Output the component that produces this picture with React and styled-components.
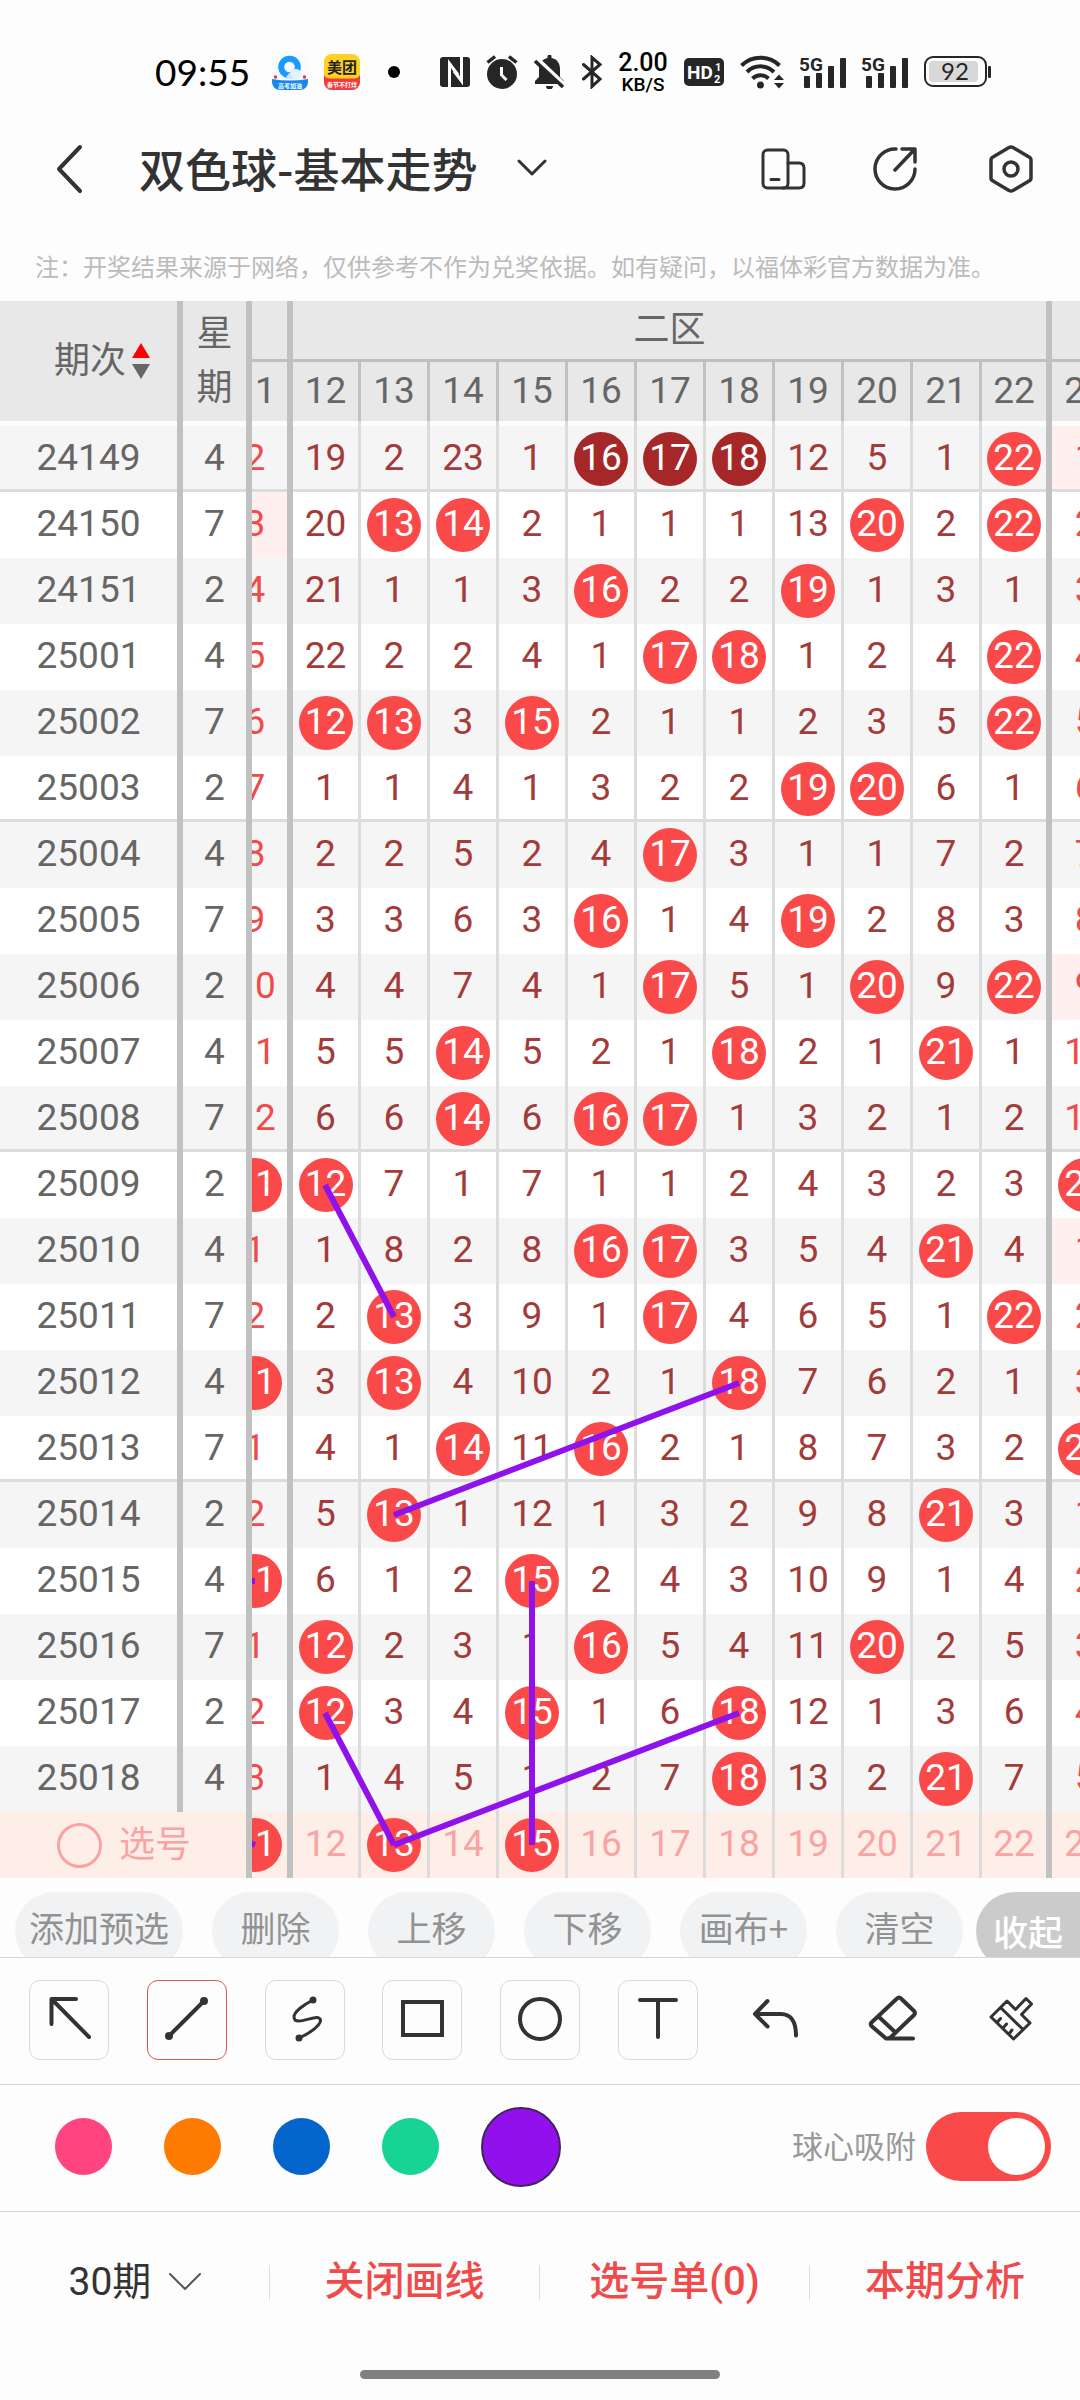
import React, { useLayoutEffect, useRef, useState } from 'react';
import styled, { createGlobalStyle, css } from 'styled-components';

const GlobalStyle = createGlobalStyle`
  * {
    box-sizing: border-box;
  }
  body {
    margin: 0;
    background: #fdfdfd;
    color: #333;
    font-family: Roboto, "Noto Sans CJK SC", sans-serif;
  }
  button, select, input {
    margin: 0;
    padding: 0;
    border: 0;
    background: none;
    color: inherit;
    font: inherit;
    appearance: none;
    cursor: pointer;
  }
`;

/* ---------- data ---------- */

const COLUMNS = [11, 12, 13, 14, 15, 16, 17, 18, 19, 20, 21, 22, 23];

// one entry per column: a number of missed draws, B for a drawn ball,
// D for a repeated ball, a trailing p for a pink cell
const DRAWS = [
  ['24149', 4, '2 19 2 23 1 D D D 12 5 1 B 1p'],
  ['24150', 7, '3p 20 B B 2 1 1 1 13 B 2 B 2'],
  ['24151', 2, '4 21 1 1 3 B 2 2 B 1 3 1 3'],
  ['25001', 4, '5 22 2 2 4 1 B B 1 2 4 B 4'],
  ['25002', 7, '6 B B 3 B 2 1 1 2 3 5 B 5'],
  ['25003', 2, '7 1 1 4 1 3 2 2 B B 6 1 6'],
  ['25004', 4, '8 2 2 5 2 4 B 3 1 1 7 2 7'],
  ['25005', 7, '9 3 3 6 3 B 1 4 B 2 8 3 8'],
  ['25006', 2, '10 4 4 7 4 1 B 5 1 B 9 B 9p'],
  ['25007', 4, '11 5 5 B 5 2 1 B 2 1 B 1 10'],
  ['25008', 7, '12 6 6 B 6 B B 1 3 2 1 2 11'],
  ['25009', 2, 'B B 7 1 7 1 1 2 4 3 2 3 B'],
  ['25010', 4, '1 1 8 2 8 B B 3 5 4 B 4 1p'],
  ['25011', 7, '2 2 B 3 9 1 B 4 6 5 1 B 2'],
  ['25012', 4, 'B 3 B 4 10 2 1 B 7 6 2 1 3'],
  ['25013', 7, '1 4 1 B 11 B 2 1 8 7 3 2 B'],
  ['25014', 2, '2 5 B 1 12 1 3 2 9 8 B 3 1'],
  ['25015', 4, 'B 6 1 2 B 2 4 3 10 9 1 4 2'],
  ['25016', 7, '1 B 2 3 1 B 5 4 11 B 2 5 3'],
  ['25017', 2, '2 B 3 4 B 1 6 B 12 1 3 6 4'],
  ['25018', 4, '3 1 4 5 1 2 7 B 13 2 B 7 5'],
];

const PICKED = [11, 13, 15];

// [x1, y1, x2, y2] on the chart canvas
const LINES = [
  [102, 884, 171, 1016],
  [516, 1082, 171, 1214],
  [309, 1280, 309, 1544],
  [102, 1412, 171, 1544],
  [516, 1412, 171, 1544],
  [-60, 1280, 32, 1280],
  [-60, 1510, 32, 1544],
];

const COLORS = [
  ['粉色', '#ff4480'],
  ['橙色', '#ff7b00'],
  ['蓝色', '#0466cc'],
  ['绿色', '#18d494'],
  ['紫色', '#9210ec'],
];

/* ---------- status bar and header ---------- */

const StatusBar = styled.div`
  display: flex;
  align-items: center;
  justify-content: space-between;
  height: 114px;
  padding: 30px 89px 0 155px;
  color: #000;
`;

const StatusGroup = styled.div`
  display: flex;
  align-items: center;
  gap: 16px;
  svg {
    display: block;
  }
`;

const Clock = styled.time`
  margin-right: 6px;
  font: 400 37px/44px Lato, sans-serif;
`;

const Dot = styled.i`
  width: 12px;
  height: 12px;
  margin-left: 12px;
  border-radius: 50%;
  background: #000;
`;

const Speed = styled.div`
  width: 50px;
  text-align: center;
  font: 500 19px/19px Roboto, sans-serif;
  b {
    display: block;
    font-weight: 500;
    font-size: 25px;
    line-height: 25px;
  }
`;

const Header = styled.header`
  display: flex;
  align-items: center;
  height: 110px;
  padding: 0 45px 0 55px;
`;

const IconButton = styled.button`
  display: block;
  svg {
    display: block;
  }
`;

const Title = styled.h1`
  margin: 0 auto 0 54px;
  font: 500 46px/60px "Noto Sans CJK SC", sans-serif;
  button {
    display: flex;
    align-items: center;
    gap: 40px;
    padding-bottom: 4px;
  }
`;

const HeaderActions = styled.div`
  display: flex;
  gap: 66px;
`;

const Notice = styled.p`
  margin: 0;
  padding: 25px 35px 18px;
  color: #bbb;
  font: 24px/34px "Noto Sans CJK SC", sans-serif;
  white-space: nowrap;
`;

/* ---------- chart ---------- */

const Chart = styled.section`
  display: flex;
`;

const ScrollPane = styled.div`
  flex: 1;
  min-width: 0;
  overflow-x: auto;
  overflow-y: hidden;
  scrollbar-width: none;
`;

const Canvas = styled.div`
  position: relative;
  width: max-content;
`;

const Overlay = styled.svg`
  position: absolute;
  inset: 0;
  width: 100%;
  height: 100%;
  overflow: visible;
  pointer-events: none;
`;

const Table = styled.table`
  table-layout: fixed;
  width: ${p => p.$width}px;
  border-collapse: separate;
  border-spacing: 0;
  font-size: 37px;
  line-height: 44px;
  text-align: center;
  th, td {
    padding: 0;
    font-weight: 400;
  }
`;

const edge = css`
  border-right: ${p => (p.$thick ? '6px solid #c1c1c1' : `3px solid ${p.$head ? '#c1c1c1' : '#dcdcdc'}`)};
`;

const HeadCell = styled.th`
  ${edge}
  height: ${p => p.$height}px;
  background: #e8e8e8;
  color: #666;
  border-bottom: ${p => (p.$zone ? '3px solid #bfbfbf' : '0')};
  font-size: ${p => (p.$zone ? 36 : 37)}px;
`;

const WeekHead = styled(HeadCell)`
  font-size: 36px;
  line-height: 54px;
  padding: 0 12px;
`;

const SortButton = styled.button`
  display: flex;
  align-items: center;
  gap: 6px;
  padding-left: 54px;
  font-size: 36px;
`;

const SpaceCell = styled.td`
  ${edge}
  height: 5px;
`;

const Row = styled.tr`
  height: 66px;
  background: ${p => (p.$pick ? '#feeee8' : p.$odd ? '#f5f5f5' : '#fff')};
  td, th {
    box-shadow: ${p => (p.$ruled ? 'inset 0 -3px 0 #dcdcdc' : 'none')};
  }
`;

const Cell = styled.td`
  ${edge}
  height: 66px;
  color: ${p => p.$color || '#666'};
  background: ${p => (p.$pink ? '#ffefef' : 'transparent')};
`;

const Num = styled.span`
  display: block;
  padding-bottom: 2px;
`;

const Ball = styled.span`
  display: block;
  width: 54px;
  height: 54px;
  margin: 0 auto;
  border-radius: 50%;
  background: ${p => (p.$dark ? '#a52727' : '#f94949')};
  color: #fff;
  line-height: 52px;
`;

const PickLabel = styled.label`
  display: flex;
  align-items: center;
  gap: 17px;
  padding-left: 57px;
  font-size: 36px;
  input {
    width: 45px;
    height: 45px;
    border: 3px solid #f9a3a3;
    border-radius: 50%;
  }
`;

/* ---------- bottom bars ---------- */

const PillBar = styled.div`
  display: flex;
  height: 79px;
  padding-top: 14px;
  overflow: hidden;
`;

const PillList = styled.div`
  flex: 1;
  display: flex;
  gap: 29px;
  min-width: 0;
  padding-left: 15px;
  overflow: hidden;
`;

const Pill = styled.button`
  flex: 0 0 auto;
  min-width: 127px;
  height: 78px;
  padding: 0 14px 8px;
  border-radius: 39px;
  background: #f1f2f4;
  color: #929292;
  font: 35px/50px "Noto Sans CJK SC", sans-serif;
`;

const FoldButton = styled(Pill)`
  width: 104px;
  min-width: 0;
  padding: 0;
  border-radius: 39px 0 0 39px;
  background: #cbcbcb;
  color: #fff;
  font-weight: 500;
`;

const ToolBar = styled.div`
  display: flex;
  align-items: center;
  justify-content: space-between;
  height: 127px;
  padding: 0 29px 3px;
  border-top: 1px solid #d6d6d6;
`;

const Tool = styled.button`
  width: 80px;
  height: 80px;
  border: 1px solid ${p => (p.$active ? '#e05555' : p.$plain ? 'transparent' : '#dadada')};
  border-radius: 11px;
  svg {
    display: block;
    margin: -1px;
  }
`;

const Swatches = styled.div`
  display: flex;
  align-items: center;
`;

const Swatch = styled.input`
  width: 57px;
  height: 57px;
  margin: 0 26px;
  border-radius: 50%;
  background: ${p => p.$color};
  &:checked {
    width: 80px;
    height: 80px;
    margin: 0 16px;
    border: 2px solid #42245c;
  }
`;

const SwitchLabel = styled.label`
  display: flex;
  align-items: center;
  gap: 10px;
  color: #999;
  font: 31px/44px "Noto Sans CJK SC", sans-serif;
`;

const SwitchText = styled.span`
  padding-bottom: 4px;
`;

const Switch = styled.input`
  width: 125px;
  height: 69px;
  padding: 6px;
  border-radius: 35px;
  background: ${p => (p.checked ? '#f94949' : '#ccc')};
  &::before {
    content: '';
    display: block;
    width: 57px;
    height: 57px;
    margin-left: ${p => (p.checked ? 'auto' : '0')};
    border-radius: 50%;
    background: #fff;
  }
`;

const BottomNav = styled.nav`
  display: grid;
  grid-template-columns: repeat(4, 1fr);
  align-items: center;
  height: 141px;
  border-top: 1px solid #d6d6d6;
`;

const NavItem = styled.div`
  display: flex;
  align-items: center;
  justify-content: center;
  gap: 17px;
  height: 35px;
  border-right: 1px solid #ddd;
  font-size: 39px;
  &:last-child {
    border-right: 0;
  }
`;

const NavButton = styled.button`
  color: #f04b4b;
  font: 500 40px/56px Roboto, "Noto Sans CJK SC", sans-serif;
  white-space: nowrap;
`;

const HomeBar = styled.div`
  width: 33.33%;
  height: 9px;
  margin: 18px auto 21px;
  border-radius: 5px;
  background: #808080;
`;

/* ---------- icons ---------- */

const Stroke = ({ w, h, size = 3, color = '#333', join = 'round', children }) => (
  <svg width={w} height={h} viewBox={`0 0 ${w} ${h}`} fill="none" stroke={color}
    strokeWidth={size} strokeLinecap="round" strokeLinejoin={join} aria-hidden="true">
    {children}
  </svg>
);

const BrowserIcon = () => (
  <svg width="36" height="36" viewBox="0 0 36 36" aria-hidden="true">
    <rect width="36" height="36" rx="8" fill="#f8fafc" />
    <circle cx="17.5" cy="13" r="8.3" fill="none" stroke="#1a9cff" strokeWidth="6" />
    <path d="M14 23a9 9 0 0 0 14-5l-7-3z" fill="#c9e6ff" />
    <circle cx="24" cy="20" r="5" fill="#e2f2ff" />
    <path d="M0 25q18 3 36 0v3a8 8 0 0 1-8 8H8a8 8 0 0 1-8-8z" fill="#1488ee" />
    <circle cx="3.5" cy="23" r="1.7" fill="#e33" />
    <circle cx="32.5" cy="23" r="1.7" fill="#e33" />
    <text x="18" y="33.5" fontSize="6" fontWeight="700" textAnchor="middle" fill="#fff">高考加油</text>
  </svg>
);

const MeituanIcon = () => (
  <svg width="36" height="36" viewBox="0 0 36 36" aria-hidden="true">
    <rect width="36" height="36" rx="8" fill="#ffd21f" />
    <path d="M0 21q2 3.5 6 3.5h24q4 0 6-3.5v7a8 8 0 0 1-8 8H8a8 8 0 0 1-8-8z" fill="#f23a3f" />
    <text x="18" y="18.5" fontSize="15" fontWeight="700" textAnchor="middle" fill="#222">美团</text>
    <text x="18" y="33" fontSize="6" fontWeight="700" textAnchor="middle" fill="#fff">春节不打烊</text>
  </svg>
);

const NfcIcon = () => (
  <svg width="30" height="30" viewBox="0 0 30 30" aria-hidden="true">
    <rect width="30" height="30" rx="3" fill="#262626" />
    <path d="M9.5 30V6.500L18 18M21.500 0v24L14 14" fill="none" stroke="#fff" strokeWidth="3" />
  </svg>
);

const AlarmIcon = () => (
  <svg width="32" height="34" viewBox="0 0 32 34" aria-hidden="true">
    <circle cx="16" cy="19" r="15" fill="#262626" />
    <path d="M1.500 7.500L9 1.500M30.500 7.500L23 1.500" stroke="#262626" strokeWidth="3.5" />
    <path d="M15.500 12v8l5 5" fill="none" stroke="#fff" strokeWidth="3" />
  </svg>
);

const BellOffIcon = () => (
  <svg width="32" height="34" viewBox="0 0 32 34" aria-hidden="true">
    <path d="M1 29v-3l4-4v-8C5 8 9 4 13.500 3V1.500a2 2 0 0 1 4 0V3C23 4 26 8 26 14v8l4 4v3z" fill="#262626" />
    <path d="M12 31h7a3.500 3.500 0 0 1-7 0z" fill="#262626" />
    <path d="M3 3.500L32 31" stroke="#fdfdfd" strokeWidth="4" />
    <path d="M1 6l28 26" stroke="#262626" strokeWidth="3.5" />
  </svg>
);

const HdIcon = () => (
  <svg width="40" height="28" viewBox="0 0 40 28" fill="#fff" fontFamily="Roboto, sans-serif" fontWeight="700" aria-hidden="true">
    <rect width="40" height="28" rx="5" fill="#262626" />
    <text x="3" y="21" fontSize="19">HD</text>
    <text x="31" y="13" fontSize="11">1</text>
    <text x="30" y="25" fontSize="11">2</text>
  </svg>
);

const WifiIcon = () => (
  <svg width="44" height="34" viewBox="0 0 44 34" aria-hidden="true">
    <g fill="none" stroke="#262626" strokeWidth="4">
      <path d="M1.500 10.500a27 27 0 0 1 38 0" />
      <path d="M7 17a19 19 0 0 1 27 0" />
      <path d="M12.500 23.500a11.500 11.500 0 0 1 16 0" />
    </g>
    <circle cx="20.500" cy="30" r="3.5" fill="#262626" />
    <path d="M34 25l5-5.500 5 5.500zM34 28l5 5.500 5-5.500z" fill="#262626" />
  </svg>
);

const SignalIcon = () => (
  <svg width="46" height="33" viewBox="0 0 46 33" fill="#262626" aria-hidden="true">
    <text x="-1" y="15" fontSize="19" fontWeight="700" fontFamily="Roboto, sans-serif">5G</text>
    <rect x="4" y="20" width="6" height="12" rx="1" />
    <rect x="16" y="17" width="6" height="15" rx="1" />
    <rect x="28" y="10" width="6" height="22" rx="1" />
    <rect x="40" y="2" width="6" height="30" rx="1" />
  </svg>
);

const BatteryIcon = () => (
  <svg width="67" height="32" viewBox="0 0 67 32" aria-hidden="true">
    <rect x="1" y="1" width="61" height="29" rx="8" fill="none" stroke="#262626" strokeWidth="2" />
    <rect x="5" y="5" width="49" height="21" rx="4" fill="#d8d8d8" />
    <rect x="64" y="10" width="3" height="12" rx="1" fill="#262626" />
    <text x="31" y="24" fontSize="24" textAnchor="middle" fontFamily="Lato, sans-serif" fill="#262626">92</text>
  </svg>
);

const TOOLS = [
  ['箭头', <path d="M60 57L23 19.500M47 19H22.500V44" />],
  ['直线', <><path d="M22 56L57 21" /><circle cx="22" cy="56" r="2" /><circle cx="57" cy="21" r="2" /></>],
  ['曲线', (
    <g strokeWidth="3">
      <path d="M48 20C38 25 29 32 29 37C29 46 46 37 52 37.500C61 39 52 50 34 58" />
      <circle cx="48" cy="20" r="2" />
      <circle cx="34" cy="58" r="2" />
    </g>
  )],
  ['矩形', <path d="M21 22H60V55H21Z" strokeLinejoin="miter" />],
  ['圆形', <circle cx="40" cy="39" r="20" />],
  ['文字', <path d="M22 20H58M40 20V57" />],
];

const ACTIONS = [
  ['撤销', <path d="M31.500 21L19 34L31.500 46.500M19 34H45C55 34 60 42 60 55.500" />],
  ['橡皮', <path d="M44 18.500Q46 16.500 48 18.500L61 31Q63 33 61 35L38 57Q36 59 33 58.500L18.500 46Q17 44 18.500 42.500ZM26 37L42 52M33 58.500H60" />],
  ['清除', (
    <g strokeWidth="3">
      <path d="M20 37L36 21L44.500 29.500L55 18.500L60.500 24L50.500 34.500L59 43L42.500 59ZM29.500 27.500L52 49.500M26 42.500L29.500 38.500M32 48L35.500 44M38 54L41 50" />
    </g>
  )],
];

/* ---------- parts ---------- */

const isThick = n => n === 11 || n === 22;

const PhoneStatus = () => (
  <StatusBar>
    <StatusGroup>
      <Clock>09:55</Clock>
      <BrowserIcon />
      <MeituanIcon />
      <Dot />
    </StatusGroup>
    <StatusGroup>
      <NfcIcon />
      <AlarmIcon />
      <BellOffIcon />
      <Stroke w={20} h={34} size={3} color="#262626" join="miter">
        <path d="M1.500 9.500L18 24L10 31.500V2.500L18 9.500L1.500 24" />
      </Stroke>
      <Speed><b>2.00</b>KB/S</Speed>
      <HdIcon />
      <WifiIcon />
      <SignalIcon />
      <SignalIcon />
      <BatteryIcon />
    </StatusGroup>
  </StatusBar>
);

const FrozenTable = () => (
  <Table $width={252}>
    <colgroup>
      <col width="183" />
      <col width="69" />
    </colgroup>
    <thead>
      <tr>
        <HeadCell $head $thick $height={120}>
          <SortButton>
            期次
            <svg width="18" height="36" viewBox="0 0 18 36" aria-hidden="true">
              <path d="M9 0L18 15H0z" fill="#f00" />
              <path d="M9 36L18 21H0z" fill="#666" />
            </svg>
          </SortButton>
        </HeadCell>
        <WeekHead $head $thick $height={120}>星期</WeekHead>
      </tr>
    </thead>
    <tbody>
      <tr>
        <SpaceCell $thick />
        <SpaceCell $thick />
      </tr>
      {DRAWS.map(([issue, day], i) => (
        <Row key={issue} $odd={i % 2 === 0} $ruled={i % 5 === 0 && i < 20}>
          <Cell as="th" scope="row" $thick><Num>{issue}</Num></Cell>
          <Cell $thick><Num>{day}</Num></Cell>
        </Row>
      ))}
      <Row $pick>
        <Cell as="th" colSpan="2" $thick $color="#f9a3a3">
          <PickLabel>
            <input type="radio" name="pick" />
            选号
          </PickLabel>
        </Cell>
      </Row>
    </tbody>
  </Table>
);

const NumberCell = ({ column, value }) => {
  const pink = value.endsWith('p');
  const ball = value === 'B' || value === 'D';
  const outer = column === 11 || column === 23;
  return (
    <Cell $thick={isThick(column)} $pink={pink} $color={outer ? '#f04a4a' : '#a33b3b'}>
      {ball ? <Ball $dark={value === 'D'}>{column}</Ball> : <Num>{parseInt(value, 10)}</Num>}
    </Cell>
  );
};

const NumberTable = () => (
  <Table $width={898}>
    <colgroup>
      {COLUMNS.map(n => <col key={n} width={isThick(n) ? 70 : n === 12 ? 68 : 69} />)}
    </colgroup>
    <thead>
      <tr>
        <HeadCell $head $thick $zone $height={61} />
        <HeadCell $head $thick $zone $height={61} colSpan="11">二区</HeadCell>
        <HeadCell $head $zone $height={61} />
      </tr>
      <tr>
        {COLUMNS.map(n => (
          <HeadCell key={n} $head $thick={isThick(n)} $height={59}><Num>{n}</Num></HeadCell>
        ))}
      </tr>
    </thead>
    <tbody>
      <tr>
        {COLUMNS.map(n => <SpaceCell key={n} $thick={isThick(n)} />)}
      </tr>
      {DRAWS.map(([issue, , cells], i) => (
        <Row key={issue} $odd={i % 2 === 0} $ruled={i % 5 === 0 && i < 20}>
          {cells.split(' ').map((value, c) => (
            <NumberCell key={COLUMNS[c]} column={COLUMNS[c]} value={value} />
          ))}
        </Row>
      ))}
      <Row $pick>
        {COLUMNS.map(n => (
          <Cell key={n} $thick={isThick(n)} $color="#f9a3a3">
            {PICKED.includes(n) ? <Ball>{n}</Ball> : <Num>{n}</Num>}
          </Cell>
        ))}
      </Row>
    </tbody>
  </Table>
);

const TrendChart = () => {
  const pane = useRef(null);

  // open with the second zone in view
  useLayoutEffect(() => {
    pane.current.scrollLeft = 29;
  }, []);

  return (
    <Chart>
      <FrozenTable />
      <ScrollPane ref={pane}>
        <Canvas>
          <NumberTable />
          <Overlay stroke="#9012ea" strokeWidth="6" aria-hidden="true">
            {LINES.map(([x1, y1, x2, y2]) => (
              <line key={`${x1}-${y1}-${x2}`} x1={x1} y1={y1} x2={x2} y2={y2} />
            ))}
          </Overlay>
        </Canvas>
      </ScrollPane>
    </Chart>
  );
};

const DrawingBars = () => {
  const [tool, setTool] = useState('直线');
  const [color, setColor] = useState('紫色');
  const [snap, setSnap] = useState(true);

  return (
    <>
      <PillBar>
        <PillList>
          {['添加预选', '删除', '上移', '下移', '画布+', '清空'].map(name => (
            <Pill key={name}>{name}</Pill>
          ))}
        </PillList>
        <FoldButton>收起</FoldButton>
      </PillBar>
      <ToolBar>
        {TOOLS.map(([name, icon]) => (
          <Tool key={name} aria-label={name} $active={tool === name} onClick={() => setTool(name)}>
            <Stroke w={80} h={80} size={4}>{icon}</Stroke>
          </Tool>
        ))}
        {ACTIONS.map(([name, icon]) => (
          <Tool key={name} aria-label={name} $plain>
            <Stroke w={80} h={80} size={4}>{icon}</Stroke>
          </Tool>
        ))}
      </ToolBar>
      <ToolBar>
        <Swatches>
          {COLORS.map(([name, value]) => (
            <Swatch key={name} type="radio" name="color" aria-label={name} $color={value}
              checked={color === name} onChange={() => setColor(name)} />
          ))}
        </Swatches>
        <SwitchLabel>
          <SwitchText>球心吸附</SwitchText>
          <Switch type="checkbox" role="switch" checked={snap} onChange={() => setSnap(!snap)} />
        </SwitchLabel>
      </ToolBar>
    </>
  );
};

const App = () => {
  return (
    <main>
      <GlobalStyle />
      <PhoneStatus />
      <Header>
        <IconButton aria-label="返回">
          <Stroke w={30} h={50} size={4}><path d="M25 3L4 25L25 47" /></Stroke>
        </IconButton>
        <Title>
          <button>
            双色球-基本走势
            <Stroke w={30} h={18} size={3}><path d="M2 3L15 16L28 3" /></Stroke>
          </button>
        </Title>
        <HeaderActions>
          <IconButton aria-label="横屏">
            <Stroke w={48} h={48}>
              <rect x="4" y="5" width="25" height="38" rx="4.5" />
              <path d="M29 18H40Q45 18 45 23V38Q45 43 40 43H24M12 34.500H20" />
            </Stroke>
          </IconButton>
          <IconButton aria-label="分享">
            <Stroke w={48} h={48} size={3.5}>
              <path d="M23 4A20 20 0 1 0 42 24M22 25L41 5M29 4H42V17" />
            </Stroke>
          </IconButton>
          <IconButton aria-label="设置">
            <Stroke w={48} h={48} size={3.5}>
              <path d="M22 2.500Q24 1.500 26 2.500L42 12Q44 13 44 15V33Q44 35 42 36L26 45.500Q24 46.500 22 45.500L6 36Q4 35 4 33V15Q4 13 6 12Z" />
              <circle cx="24" cy="24" r="7" />
            </Stroke>
          </IconButton>
        </HeaderActions>
      </Header>
      <Notice>注：开奖结果来源于网络，仅供参考不作为兑奖依据。如有疑问，以福体彩官方数据为准。</Notice>
      <TrendChart />
      <DrawingBars />
      <BottomNav>
        <NavItem>
          <select aria-label="期数" defaultValue="30">
            <option value="30">30期</option>
            <option value="50">50期</option>
          </select>
          <Stroke w={32} h={18} size={2} color="#555"><path d="M1 1L16 16L31 1" /></Stroke>
        </NavItem>
        <NavItem><NavButton>关闭画线</NavButton></NavItem>
        <NavItem><NavButton>选号单(0)</NavButton></NavItem>
        <NavItem><NavButton>本期分析</NavButton></NavItem>
      </BottomNav>
      <HomeBar />
    </main>
  );
};

export default App;
